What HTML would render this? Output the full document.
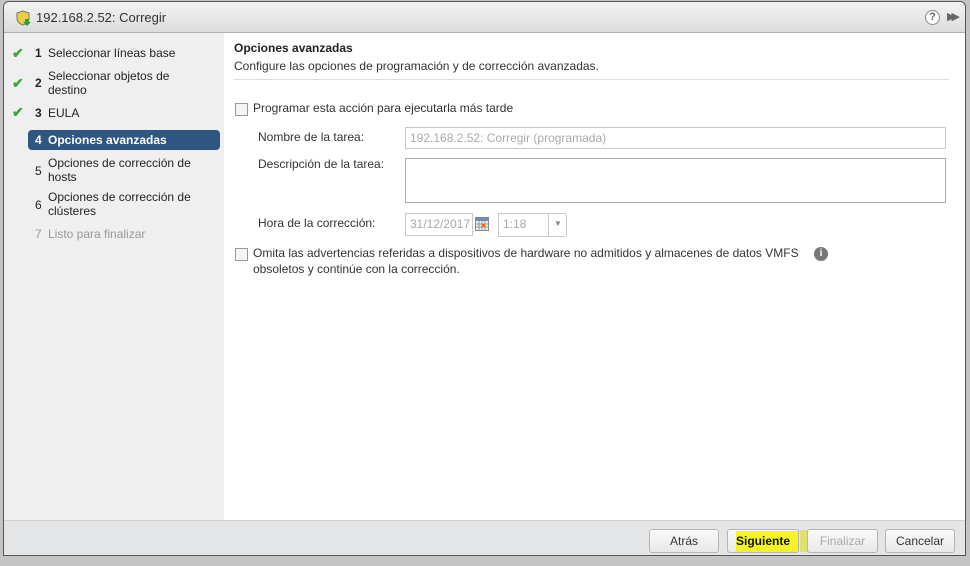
<!DOCTYPE html>
<html><head><style>
*{margin:0;padding:0;box-sizing:border-box}
body{width:970px;height:566px;background:#c4c4c4;font-family:"Liberation Sans",Arial,sans-serif;font-size:12px;color:#333;position:relative;overflow:hidden}
.win{position:absolute;left:3px;top:1px;width:963px;height:555px;background:#fff;border:1px solid #555;border-radius:6px 6px 0 0;overflow:hidden}
.title{position:absolute;left:0;top:0;width:100%;height:31px;background:linear-gradient(#f3f3f3,#dcdcdc);border-bottom:1px solid #b0b0b0}
.title span{position:absolute;left:32px;top:8px;font-size:13px;color:#333}
.side{position:absolute;left:0;top:31px;width:220px;height:487px;background:#efefef}
.foot{position:absolute;left:0;top:518px;width:100%;height:37px;background:#e4e5e7;border-top:1px solid #d0d0d0}
.st{position:absolute;font-size:12px;color:#222;line-height:14px}
.num{position:absolute;left:31px}
.lbl{position:absolute;left:44px}
.chk{position:absolute;left:8px;color:#3aa83a;font-weight:bold;font-size:14px}
.sel{position:absolute;left:24px;top:97px;width:192px;height:20px;background:#2f5680;border-radius:4px;color:#fff;font-weight:bold}
.inp{position:absolute;border:1px solid #c8c8c8;background:#fff;color:#aaa;font-size:12px;padding:3px 4px}
.cb{position:absolute;width:13px;height:13px;border:1px solid #999;background:#f4f4f4}
.btn{position:absolute;top:529px;height:24px;border:1px solid #b5b5b5;border-radius:3px;background:linear-gradient(#fafafa,#e8e8e8);text-align:center;line-height:22px;font-size:12px;color:#333}
</style></head><body>
<div class="win">
<div class="title">
<svg style="position:absolute;left:12px;top:8px" width="16" height="16"><path d="M7 1 L13 3 L13 8 C13 12 10 14 7 15 C4 14 1 12 1 8 L1 3Z" fill="#e8d040" stroke="#777"/><path d="M9 9 h4 v3 h2 l-4 4 l-4-4 h2z" fill="#3a9a3a"/></svg>
<span>192.168.2.52: Corregir</span>
<div style="position:absolute;left:921px;top:8px;width:15px;height:15px;border:1px solid #888;border-radius:50%;background:#fff;font-size:11px;font-weight:bold;color:#666;text-align:center;line-height:13px">?</div>
<div style="position:absolute;left:943px;top:8px;color:#666;font-size:11px;letter-spacing:-4px">▶▶</div>
</div>
<div class="side">
<div class="chk" style="top:12px">✔</div><div class="st num" style="top:13px;font-weight:bold">1</div><div class="st lbl" style="top:13px">Seleccionar líneas base</div>
<div class="chk" style="top:42px">✔</div><div class="st num" style="top:43px;font-weight:bold">2</div><div class="st lbl" style="top:36px">Seleccionar objetos de<br>destino</div>
<div class="chk" style="top:71px">✔</div><div class="st num" style="top:73px;font-weight:bold">3</div><div class="st lbl" style="top:73px">EULA</div>
<div class="sel"><span style="position:absolute;left:7px;top:3px">4</span><span style="position:absolute;left:20px;top:3px">Opciones avanzadas</span></div>
<div class="st num" style="top:131px">5</div><div class="st lbl" style="top:123px">Opciones de corrección de<br>hosts</div>
<div class="st num" style="top:165px">6</div><div class="st lbl" style="top:157px">Opciones de corrección de<br>clústeres</div>
<div class="st num" style="top:194px;color:#999">7</div><div class="st lbl" style="top:194px;color:#999">Listo para finalizar</div>
</div>
<div style="position:absolute;left:230px;top:39px;font-weight:bold;color:#222">Opciones avanzadas</div>
<div style="position:absolute;left:230px;top:57px;color:#333">Configure las opciones de programación y de corrección avanzadas.</div>
<div style="position:absolute;left:230px;top:77px;width:715px;height:1px;background:#ddd"></div>
<div class="cb" style="left:231px;top:101px"></div>
<div style="position:absolute;left:249px;top:99px">Programar esta acción para ejecutarla más tarde</div>
<div style="position:absolute;left:254px;top:128px">Nombre de la tarea:</div>
<div class="inp" style="left:401px;top:125px;width:541px;height:22px">192.168.2.52: Corregir (programada)</div>
<div style="position:absolute;left:254px;top:155px">Descripción de la tarea:</div>
<div class="inp" style="left:401px;top:156px;width:541px;height:45px;border-color:#aaa"></div>
<div style="position:absolute;left:254px;top:214px">Hora de la corrección:</div>
<div class="inp" style="left:401px;top:211px;width:68px;height:23px">31/12/2017</div>
<svg style="position:absolute;left:471px;top:215px" width="14" height="14"><rect x="0.5" y="0.5" width="13" height="13" fill="#eee" stroke="#888"/><rect x="1" y="1" width="12" height="3" fill="#6a8fb8"/><path d="M1 7h12M1 10h12M4 4v10M7 4v10M10 4v10" stroke="#999"/><rect x="7" y="7" width="3" height="3" fill="#e07020"/></svg>
<div class="inp" style="left:494px;top:211px;width:69px;height:24px;border-radius:0 3px 3px 0">1:18</div>
<div style="position:absolute;left:544px;top:212px;width:1px;height:22px;background:#ccc"></div>
<div style="position:absolute;left:550px;top:217px;color:#888;font-size:8px">▼</div>
<div class="cb" style="left:231px;top:246px"></div>
<div style="position:absolute;left:249px;top:243px;line-height:16px">Omita las advertencias referidas a dispositivos de hardware no admitidos y almacenes de datos VMFS<br>obsoletos y continúe con la corrección.</div>
<div style="position:absolute;left:810px;top:245px;width:14px;height:14px;border-radius:50%;background:#777;color:#fff;font-size:10px;font-weight:bold;text-align:center;line-height:14px">i</div>
<div class="foot"></div>
</div>
<div class="btn" style="left:649px;width:70px">Atrás</div>
<div class="btn" style="left:727px;width:72px;font-weight:bold;color:#111"><span style="position:absolute;left:8px;top:1px;width:62px;height:21px;background:#f4f400;opacity:.85"></span><span style="position:relative">Siguiente</span></div>
<div style="position:absolute;left:800px;top:530px;width:18px;height:22px;background:#e0e070"></div>
<div class="btn" style="left:807px;width:71px;color:#aaa">Finalizar</div>
<div class="btn" style="left:885px;width:70px">Cancelar</div>
</body></html>
